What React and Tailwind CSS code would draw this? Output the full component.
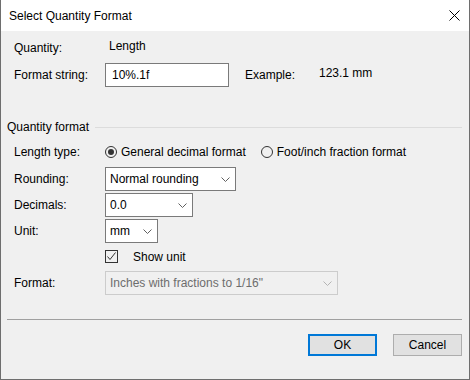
import React, { useState } from 'react';

const font = { fontFamily: '"Liberation Sans", Arial, sans-serif' };

const Chevron = ({ disabled }) => (
  <svg width="9" height="5" viewBox="0 0 9 5" className="shrink-0">
    <path d="M0.5 0.5 L4.5 4.5 L8.5 0.5" fill="none" stroke={disabled ? '#b4b4b4' : '#606060'} strokeWidth="1" />
  </svg>
);

const Combo = ({ value, width, disabled }) => (
  <div
    className={`flex h-[24px] items-center justify-between border pl-[4px] pr-[5px] ${
      disabled ? 'border-[#cccccc] bg-[#f0f0f0] text-[#6d6d6d]' : 'border-[#7a7a7a] bg-white text-black'
    } ${width}`}
  >
    <span className="whitespace-nowrap">{value}</span>
    <Chevron disabled={disabled} />
  </div>
);

const Radio = ({ checked, label }) => (
  <div className="flex items-center gap-[4px]">
    <div className="flex h-[12px] w-[12px] items-center justify-center rounded-full border border-[#333333]">
      {checked && <div className="h-[6px] w-[6px] rounded-full bg-[#333333]" />}
    </div>
    <span className="whitespace-nowrap">{label}</span>
  </div>
);

const Row = ({ label, children, className = '' }) => (
  <div className={`flex items-center ${className}`}>
    <div className="w-[91px] shrink-0">{label}</div>
    {children}
  </div>
);

export default function App() {
  const [showUnit] = useState(true);

  return (
    <div
      className="flex h-[380px] w-[470px] flex-col border-x border-b border-[#6e6e6e] bg-[#f0f0f0] text-[12px] text-black"
      style={font}
    >
      {/* title bar */}
      <div className="flex h-[31px] shrink-0 items-center justify-between bg-white pl-[8px] pr-[9px]">
        <span>Select Quantity Format</span>
        <svg width="11" height="11" viewBox="0 0 11 11">
          <path d="M0.5 0.5 L10.5 10.5 M10.5 0.5 L0.5 10.5" stroke="#000" strokeWidth="1" />
        </svg>
      </div>

      <div className="flex flex-1 flex-col">
        <div className="mt-[8px] flex h-[18px] items-center pl-[13px]">
          <div className="w-[91px]">Quantity:</div>
          <div className="-mt-[4px] pl-[4px]">Length</div>
        </div>

        <div className="mt-[6px] flex h-[24px] items-center pl-[13px]">
          <div className="w-[91px]">Format string:</div>
          <div className="flex h-[24px] w-[124px] items-center border border-[#7a7a7a] bg-white pl-[6px]">10%.1f</div>
          <div className="ml-[16px] w-[74px]">Example:</div>
          <div className="-mt-[5px]">123.1 mm</div>
        </div>

        <div className="mt-[32px] flex h-[16px] items-center pl-[6px] pr-[7px]">
          <span className="whitespace-nowrap">Quantity format</span>
          <div className="ml-[6px] h-px flex-1 bg-[#dcdcdc]" />
        </div>

        <div className="flex flex-col pl-[13px]">
          <Row label="Length type:" className="mt-[9px] h-[16px]">
            <Radio checked label="General decimal format" />
            <div className="ml-[15px]">
              <Radio label="Foot/inch fraction format" />
            </div>
          </Row>

          <Row label="Rounding:" className="mt-[7px]">
            <Combo value="Normal rounding" width="w-[131px]" />
          </Row>

          <Row label="Decimals:" className="mt-[2px]">
            <Combo value="0.0" width="w-[88px]" />
          </Row>

          <Row label="Unit:" className="mt-[2px]">
            <Combo value="mm" width="w-[53px]" />
          </Row>

          <Row label="" className="mt-[7px] h-[13px]">
            <div className="flex items-center gap-[15px]">
              <div className="h-[13px] w-[13px] border border-[#333333]">
                {showUnit && (
                  <svg width="11" height="11" viewBox="0 0 11 11">
                    <path d="M1.5 5.5 L4 8.5 L9.5 1.5" fill="none" stroke="#333" strokeWidth="1" />
                  </svg>
                )}
              </div>
              <span>Show unit</span>
            </div>
          </Row>

          <Row label="Format:" className="mt-[8px]">
            <Combo value={'Inches with fractions to 1/16"'} width="w-[233px]" disabled />
          </Row>
        </div>

        <div className="ml-[6px] mr-[7px] mt-[24px] h-px bg-[#a0a0a0]" />

        <div className="mt-[14px] flex justify-end gap-[16px] pr-[7px]">
          <button className="h-[22px] w-[69px] border-2 border-[#0078d7] bg-[#e1e1e1] text-[12px]">OK</button>
          <button className="h-[22px] w-[69px] border border-[#adadad] bg-[#e1e1e1] text-[12px]">Cancel</button>
        </div>
      </div>
    </div>
  );
}
